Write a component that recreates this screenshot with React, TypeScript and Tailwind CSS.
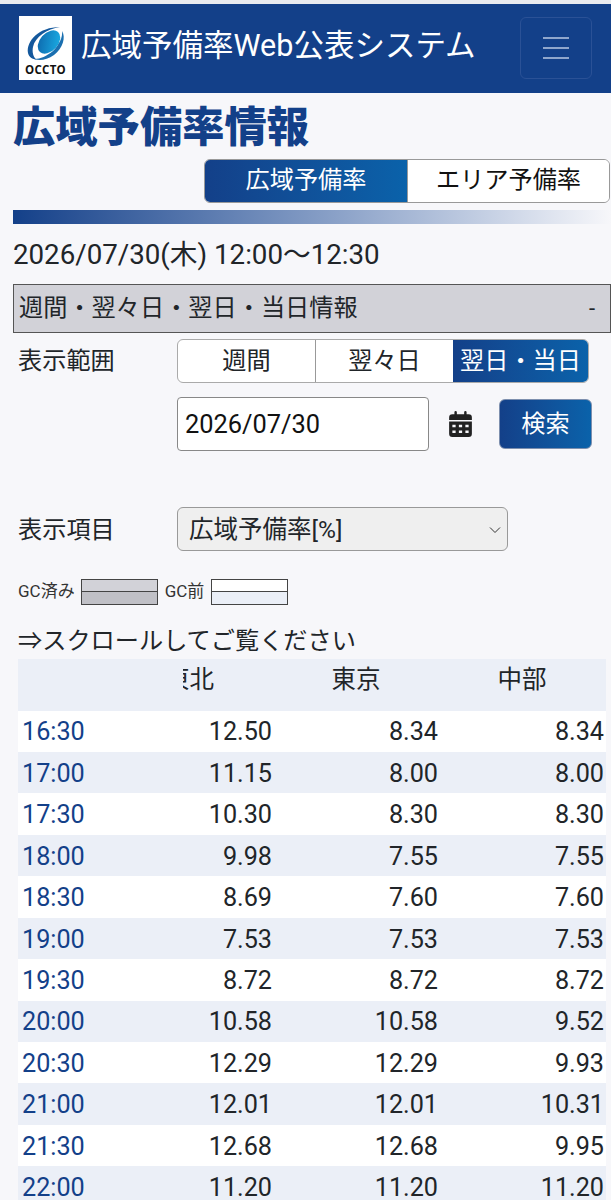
const font = "[font-family:Roboto,'Noto_Sans_CJK_JP',sans-serif]";

const rows = [
  ["16:30", "12.50", "8.34", "8.34"],
  ["17:00", "11.15", "8.00", "8.00"],
  ["17:30", "10.30", "8.30", "8.30"],
  ["18:00", "9.98", "7.55", "7.55"],
  ["18:30", "8.69", "7.60", "7.60"],
  ["19:00", "7.53", "7.53", "7.53"],
  ["19:30", "8.72", "8.72", "8.72"],
  ["20:00", "10.58", "10.58", "9.52"],
  ["20:30", "12.29", "12.29", "9.93"],
  ["21:00", "12.01", "12.01", "10.31"],
  ["21:30", "12.68", "12.68", "9.95"],
  ["22:00", "11.20", "11.20", "11.20"],
];

const Logo = () => (
  <div className="flex h-[64px] w-[53px] shrink-0 flex-col items-center bg-white pt-[10px]">
    <svg width="40" height="37" viewBox="0 0 40 37">
      <defs>
        <linearGradient id="ball" x1="0" y1="1" x2="1" y2="0">
          <stop offset="0" stopColor="#0c62a8" />
          <stop offset="1" stopColor="#1cb4ea" />
        </linearGradient>
      </defs>
      <ellipse cx="23" cy="16" rx="9" ry="13.5" transform="rotate(42 23 16)" fill="url(#ball)" />
      <path d="M2 27C0 15 13 1 34 1C21 3 9 11 7 21C6 26 7 31 11 34C6 33 3 31 2 27Z" fill="#14589c" />
      <path d="M36 5C40 11 37 22 28 29C21 34 13 35 9 33C14 33 21 30 27 25C33 19 37 11 36 5Z" fill="#1a6fb0" />
    </svg>
    <span className="mt-[1px] text-[11.5px] leading-[12px] font-bold tracking-[0.3px] text-[#111] [font-family:'Open_Sans',sans-serif]">OCCTO</span>
  </div>
);

const App = () => {
  return (
    <div className={`h-[1200px] w-[611px] overflow-hidden bg-[#f7f7fa] text-[#212529] ${font}`}>
      <div className="h-[4px] bg-[#e9ebf0]" />
      {/* header */}
      <header className="flex h-[88.5px] items-center bg-[#134089] pr-[19px] pl-[19px]">
        <Logo />
        <h1 className="ml-[9px] flex-1 pb-[4px] text-[30.5px] whitespace-nowrap text-white">広域予備率Web公表システム</h1>
        <button className="flex h-[62px] w-[72px] items-center justify-center rounded-[6px] border border-[#2a5196]">
          <span className="flex w-[26px] flex-col gap-[8px]">
            <i className="h-[2px] bg-[#8fa6cc]" />
            <i className="h-[2px] bg-[#8fa6cc]" />
            <i className="h-[2px] bg-[#8fa6cc]" />
          </span>
        </button>
      </header>

      <main className="pl-[13px]">
        <h2 className="mt-[5px] h-[61px] text-[42.3px] leading-[60px] font-black text-[#134089]">広域予備率情報</h2>

        <div className="flex justify-end pr-px">
          <div className="flex h-[44px] w-[406px] overflow-hidden rounded-[6px] border border-[#999] text-[24.2px] leading-[40px]">
            <div className="w-[202px] bg-gradient-to-r from-[#134089] to-[#0a62aa] text-center text-white">広域予備率</div>
            <div className="flex-1 border-l border-[#999] bg-white text-center text-[#111]">エリア予備率</div>
          </div>
        </div>

        <div className="mt-[7px] h-[14px] bg-gradient-to-r from-[#134089] to-[#f7f7fa]" />

        <p className="mt-[9px] h-[44px] text-[27.7px] leading-[44px]">2026/07/30(木) 12:00〜12:30</p>

        <div className="mt-[7px] flex h-[49px] items-center justify-between border border-[#555] bg-[#d2d2d8] pr-[15px] pl-[5px] text-[24.2px]">
          <span>週間・翌々日・翌日・当日情報</span>
          <span className="text-[22px]">-</span>
        </div>

        <div className="mt-[6px] flex pl-[5px]">
          <div className="flex h-[44px] w-[159px] items-center pt-[1px] text-[24.2px]">表示範囲</div>
          <div className="flex h-[44px] w-[412px] overflow-hidden rounded-[6px] border border-[#aaa] bg-white text-center text-[24.2px] leading-[42px]">
            <div className="w-[137px]">週間</div>
            <div className="w-[138px] border-l border-[#999]">翌々日</div>
            <div className="flex-1 bg-gradient-to-r from-[#134089] to-[#0a62aa] whitespace-nowrap text-white">翌日・当日</div>
          </div>
        </div>

        <div className="mt-[14px] flex items-center pl-[164px]">
          <div className="flex h-[54px] w-[252px] items-center rounded-[4px] border border-[#888] bg-white pt-[2px] pl-[7px] text-[25.4px] text-[#111]">2026/07/30</div>
          <svg className="ml-[20px] h-[26px] w-[23px] fill-[#222]" viewBox="0 0 448 512">
            <path d="M152 24v40h144V24a24 24 0 0 1 48 0v40h40a64 64 0 0 1 64 64v48H0v-48a64 64 0 0 1 64-64h40V24a24 24 0 0 1 48 0ZM0 208h448v240a64 64 0 0 1-64 64H64a64 64 0 0 1-64-64Zm64 64v48h64v-48Zm128 0v48h64v-48Zm128 0v48h64v-48ZM64 384v48h64v-48Zm128 0v48h64v-48Zm128 0v48h64v-48Z" fillRule="evenodd" />
          </svg>
          <button className="ml-[27px] h-[50px] w-[93px] rounded-[6px] border border-[#7d8fae] bg-gradient-to-r from-[#134089] to-[#0a62aa] pt-[2px] text-[24.2px] text-white">検索</button>
        </div>

        <div className="mt-[56px] flex items-center pl-[5px]">
          <div className="w-[159px] pt-[3px] text-[24.2px]">表示項目</div>
          <div className="flex h-[44px] w-[331px] items-center justify-between rounded-[6px] border border-[#999] bg-[#efefef] pt-[3px] pr-[6px] pl-[11px] text-[24.5px]">
            <span>広域予備率[%]</span>
            <svg width="12" height="8" viewBox="0 0 12 8" fill="none" stroke="#333" strokeWidth="1">
              <path d="M1 1.5 6 6.5 11 1.5" />
            </svg>
          </div>
        </div>

        <div className="mt-[28px] flex items-center pl-[5px] text-[17px] text-[#333]">
          <span>GC済み</span>
          <div className="ml-[6px] h-[26px] w-[77px] border border-[#444] bg-[#d2d2d8]">
            <div className="mt-[11px] h-[13px] border-t border-[#444] bg-[#c0c0c6]" />
          </div>
          <span className="ml-[7px]">GC前</span>
          <div className="ml-[7px] h-[26px] w-[77px] border border-[#444] bg-white">
            <div className="mt-[11px] h-[13px] border-t border-[#444] bg-[#ebeff7]" />
          </div>
        </div>

        <p className="mt-[19px] ml-[5px] h-[35px] text-[24.2px] leading-[34px]">⇒スクロールしてご覧ください</p>

        {/* table */}
        <div className="ml-[5px] w-[588px]">
          <div className="flex h-[52px] bg-[#ebeff7] pt-[3px] text-[24.5px] leading-[36px]">
            <div className="w-[165px]" />
            <div className="w-[89px] overflow-hidden">
              <div className="ml-[-18px] whitespace-nowrap">東北</div>
            </div>
            <div className="w-[166px] pl-[2px] text-center">東京</div>
            <div className="w-[166px] pl-[2px] text-center">中部</div>
          </div>
          {rows.map((row, i) => (
            <div key={row[0]} className={`flex h-[41.45px] items-center pt-[2px] pr-[2px] text-[25.2px] ${i % 2 == 0 ? "bg-white" : "bg-[#ebeff7]"}`}>
              <span className="w-[88px] pl-[4px] text-[#134089]">{row[0]}</span>
              <span className="w-[166px] text-right">{row[1]}</span>
              <span className="w-[166px] text-right">{row[2]}</span>
              <span className="w-[166px] text-right">{row[3]}</span>
            </div>
          ))}
        </div>
      </main>
    </div>
  );
};

export default App;
